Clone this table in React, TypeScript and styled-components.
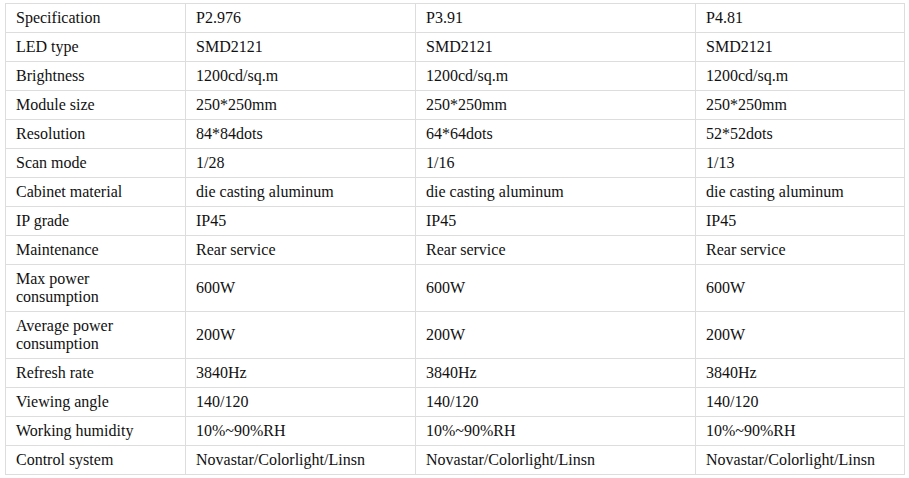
import React from 'react';
import styled, { createGlobalStyle } from 'styled-components';

const GlobalStyle = createGlobalStyle`
  body {
    margin: 0;
    background: #fff;
  }
`;

const Wrapper = styled.div`
  padding: 3px 6px 0 5px;
`;

const SpecTable = styled.table`
  width: 899px;
  border-collapse: collapse;
  table-layout: fixed;
`;

const Cell = styled.td`
  border: 1px solid #dddddd;
  padding: 5px 10px;
  vertical-align: middle;
  text-align: left;
  font-family: "Liberation Serif", "Times New Roman", serif;
  font-size: 16px;
  line-height: 18px;
  color: #111;
`;

const rows: string[][] = [
  ['Specification', 'P2.976', 'P3.91', 'P4.81'],
  ['LED type', 'SMD2121', 'SMD2121', 'SMD2121'],
  ['Brightness', '1200cd/sq.m', '1200cd/sq.m', '1200cd/sq.m'],
  ['Module size', '250*250mm', '250*250mm', '250*250mm'],
  ['Resolution', '84*84dots', '64*64dots', '52*52dots'],
  ['Scan mode', '1/28', '1/16', '1/13'],
  ['Cabinet material', 'die casting aluminum', 'die casting aluminum', 'die casting aluminum'],
  ['IP grade', 'IP45', 'IP45', 'IP45'],
  ['Maintenance', 'Rear service', 'Rear service', 'Rear service'],
  ['Max power consumption', '600W', '600W', '600W'],
  ['Average power consumption', '200W', '200W', '200W'],
  ['Refresh rate', '3840Hz', '3840Hz', '3840Hz'],
  ['Viewing angle', '140/120', '140/120', '140/120'],
  ['Working humidity', '10%~90%RH', '10%~90%RH', '10%~90%RH'],
  ['Control system', 'Novastar/Colorlight/Linsn', 'Novastar/Colorlight/Linsn', 'Novastar/Colorlight/Linsn'],
];

const colWidths = [180, 230, 280, 209];

const App: React.FC = () => {
  return (
    <Wrapper>
      <GlobalStyle />
      <SpecTable>
        <colgroup>
          {colWidths.map((w, i) => (
            <col key={i} style={{ width: w }} />
          ))}
        </colgroup>
        <tbody>
          {rows.map((row) => (
            <tr key={row[0]}>
              {row.map((cell, i) => (
                <Cell key={i}>{cell}</Cell>
              ))}
            </tr>
          ))}
        </tbody>
      </SpecTable>
    </Wrapper>
  );
};

export default App;
